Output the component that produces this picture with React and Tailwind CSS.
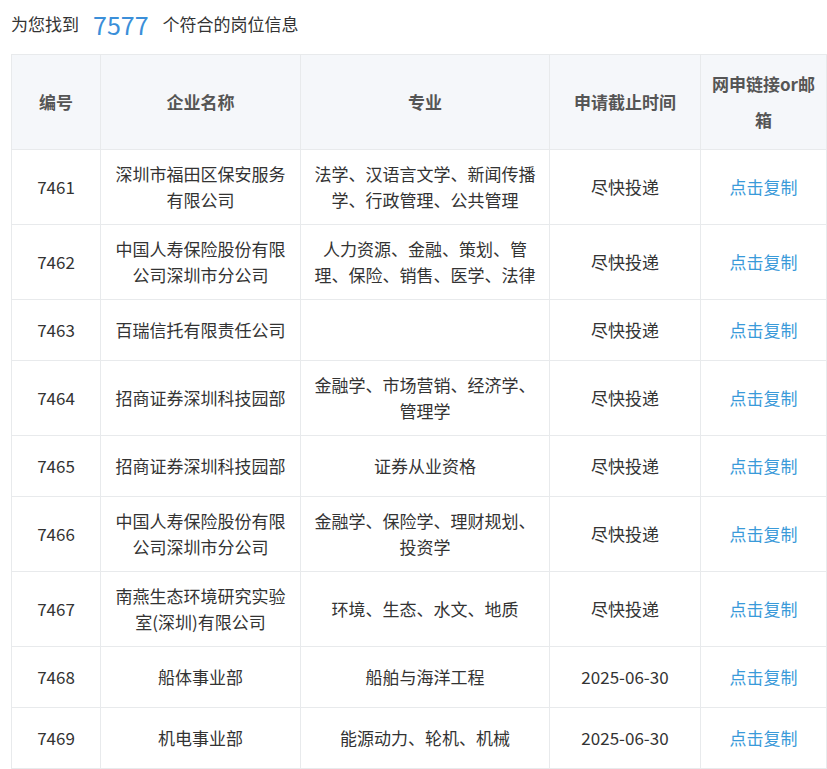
export default function App() {
  const rows = [
    ["7461", "深圳市福田区保安服务有限公司", "法学、汉语言文学、新闻传播学、行政管理、公共管理", "尽快投递"],
    ["7462", "中国人寿保险股份有限公司深圳市分公司", "人力资源、金融、策划、管理、保险、销售、医学、法律", "尽快投递"],
    ["7463", "百瑞信托有限责任公司", "", "尽快投递"],
    ["7464", "招商证券深圳科技园部", "金融学、市场营销、经济学、管理学", "尽快投递"],
    ["7465", "招商证券深圳科技园部", "证券从业资格", "尽快投递"],
    ["7466", "中国人寿保险股份有限公司深圳市分公司", "金融学、保险学、理财规划、投资学", "尽快投递"],
    ["7467", "南燕生态环境研究实验室(深圳)有限公司", "环境、生态、水文、地质", "尽快投递"],
    ["7468", "船体事业部", "船舶与海洋工程", "2025-06-30"],
    ["7469", "机电事业部", "能源动力、轮机、机械", "2025-06-30"],
  ];
  const td = "border border-[#e8eaec] px-[10px] py-[11px] h-[61px] text-center align-middle";
  return (
    <div className="bg-white w-[827px] h-[769px] overflow-hidden text-[#333] text-[17px] leading-[26px]" style={{ fontFamily: '"Noto Sans CJK SC", "Noto Sans", sans-serif' }}>
      <div className="flex items-center h-[48px] pl-[11px]">
        <span>为您找到</span>
        <span className="mx-[14px] text-[25px] text-[#3b8fd9]">7577</span>
        <span>个符合的岗位信息</span>
      </div>
      <table className="ml-[11px] w-[815px] border-collapse table-fixed mt-[6px]">
        <colgroup>
          <col className="w-[89px]" />
          <col className="w-[200px]" />
          <col className="w-[249px]" />
          <col className="w-[151px]" />
          <col className="w-[126px]" />
        </colgroup>
        <thead>
          <tr className="bg-[#f5f7fa] text-[#555] font-bold">
            <th className={td + " h-[92px]"}>编号</th>
            <th className={td}>企业名称</th>
            <th className={td}>专业</th>
            <th className={td}>申请截止时间</th>
            <th className={td + " leading-[36px]"}>网申链接or邮箱</th>
          </tr>
        </thead>
        <tbody>
          {rows.map((r) => (
            <tr key={r[0]}>
              <td className={td}>{r[0]}</td>
              <td className={td}>{r[1]}</td>
              <td className={td}>{r[2]}</td>
              <td className={td}>{r[3]}</td>
              <td className={td + " text-[#3a9ad9]"}>点击复制</td>
            </tr>
          ))}
        </tbody>
      </table>
    </div>
  );
}
